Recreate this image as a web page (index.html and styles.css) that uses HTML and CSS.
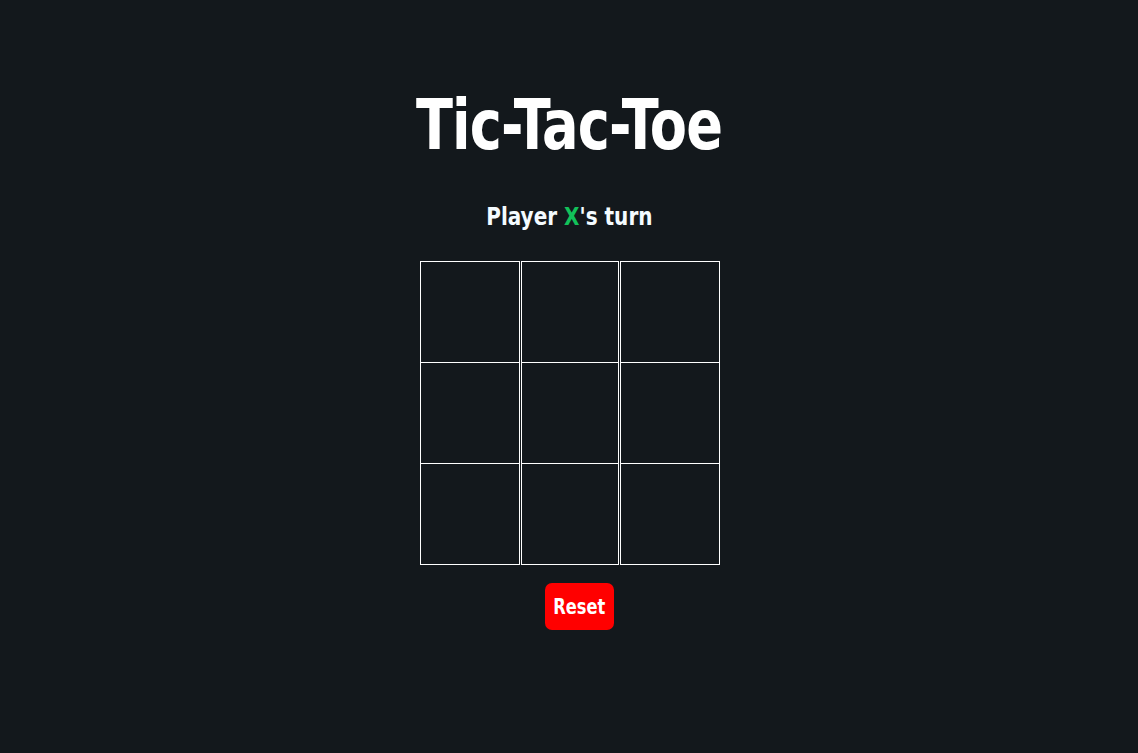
FILE: index.html
```html
<!DOCTYPE html>
<html lang="en">
<head>
<meta charset="utf-8">
<title>Tic-Tac-Toe</title>
<link rel="stylesheet" href="styles.css">
</head>
<body>
<main class="app">
  <h1 class="title">Tic-Tac-Toe</h1>
  <p class="status">Player <span class="mark-x">X</span>'s turn</p>
  <div class="board">
    <div class="cell r1"></div>
    <div class="cell r1"></div>
    <div class="cell r1"></div>
    <div class="cell"></div>
    <div class="cell"></div>
    <div class="cell"></div>
    <div class="cell"></div>
    <div class="cell"></div>
    <div class="cell"></div>
  </div>
  <button class="reset"><span class="reset-label">Reset</span></button>
</main>
</body>
</html>
```

FILE: styles.css
```css
html, body {
  margin: 0;
  padding: 0;
  background: #13181c;
  color: #ffffff;
  font-family: "DejaVu Sans Condensed", "DejaVu Sans", sans-serif;
}

.app {
  display: flex;
  flex-direction: column;
  align-items: center;
  padding-top: 82px;
}

.title {
  margin: 0;
  font-size: 70px;
  line-height: 86px;
  font-weight: 700;
  letter-spacing: -1px;
  transform: scaleX(0.86);
}

.status {
  margin: 34px 0 0 0;
  font-size: 25px;
  line-height: 30px;
  font-weight: 700;
  color: #f4fbff;
  transform: scaleX(0.89);
}

.mark-x {
  color: #12c15a;
}

.board {
  margin-top: 29px;
  margin-left: 2px;
  display: grid;
  grid-template-columns: 100px 98px 100px;
  grid-template-rows: 102px 101px 101px;
  column-gap: 1px;
}

.cell {
  border: 1px solid #ffffff;
  border-top: none;
}

.cell.r1 {
  border-top: 1px solid #ffffff;
}

.reset {
  margin-top: 18px;
  margin-left: 20px;
  width: 69px;
  height: 47px;
  border: none;
  border-radius: 7px;
  background: #ff0000;
  color: #ffffff;
  font-family: inherit;
  font-size: 21px;
  font-weight: 700;
  padding: 0;
  cursor: pointer;
}

.reset-label {
  display: inline-block;
  transform: scaleX(0.86);
}
```
